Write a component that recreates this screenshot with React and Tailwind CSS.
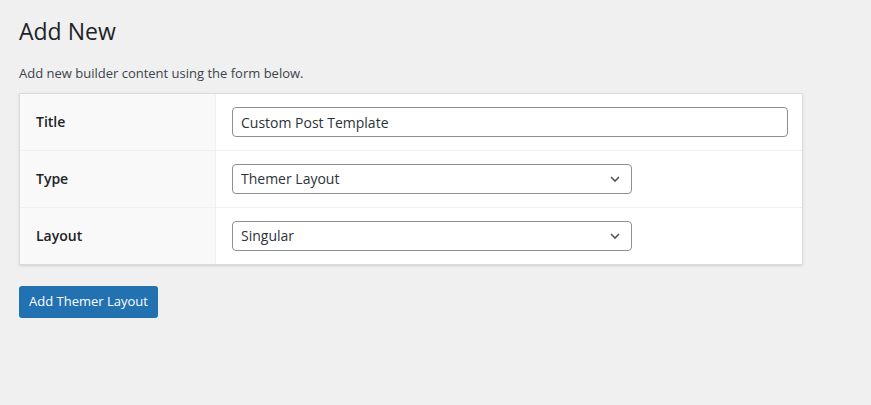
import React from 'react';

const Chevron = () => (
  <svg className="absolute right-2 top-1/2 -translate-y-1/2 pointer-events-none" width="16" height="16" viewBox="0 0 16 16" fill="none">
    <path d="M4 6l4 4 4-4" stroke="#50575e" strokeWidth="1.6" />
  </svg>
);

const Row = ({ label, children, last }) => (
  <div className={`flex ${last ? 'h-[56px]' : 'h-[57px] border-b border-[#f0f0f1]'}`}>
    <div className="w-[196px] shrink-0 bg-[#f9f9f9] border-r border-[#f0f0f1] flex items-center pl-4 text-sm font-semibold text-[#1d2327]">
      {label}
    </div>
    <div className="flex-1 flex items-center pl-4">{children}</div>
  </div>
);

const App = () => {
  return (
    <div className="min-h-screen bg-[#f0f0f1] pl-[19px] pt-[15px]" style={{ fontFamily: '"Open Sans", "Noto Sans", sans-serif' }}>
      <h1 className="text-[23px] leading-[32px] text-[#1d2327] font-normal">Add New</h1>
      <p className="mt-[17px] text-[13px] leading-[18px] text-[#3c434a]">Add new builder content using the form below.</p>

      {/* Form table */}
      <div className="mt-[11px] w-[784px] bg-white border border-[#dcdcde] shadow-sm">
        <Row label="Title">
          <input
            defaultValue="Custom Post Template"
            className="w-[556px] h-[30px] border border-[#8c8f94] rounded px-2 text-sm text-[#2c3338] outline-none"
          />
        </Row>
        <Row label="Type">
          <div className="relative w-[400px] h-[30px] border border-[#8c8f94] rounded flex items-center px-2 text-sm text-[#2c3338]">
            Themer Layout
            <Chevron />
          </div>
        </Row>
        <Row label="Layout" last>
          <div className="relative w-[400px] h-[30px] border border-[#8c8f94] rounded flex items-center px-2 text-sm text-[#2c3338]">
            Singular
            <Chevron />
          </div>
        </Row>
      </div>

      <button className="mt-[21px] h-[32px] px-[10px] bg-[#2271b1] text-white text-[13px] rounded-[3px]">
        Add Themer Layout
      </button>
    </div>
  );
};

export default App;
